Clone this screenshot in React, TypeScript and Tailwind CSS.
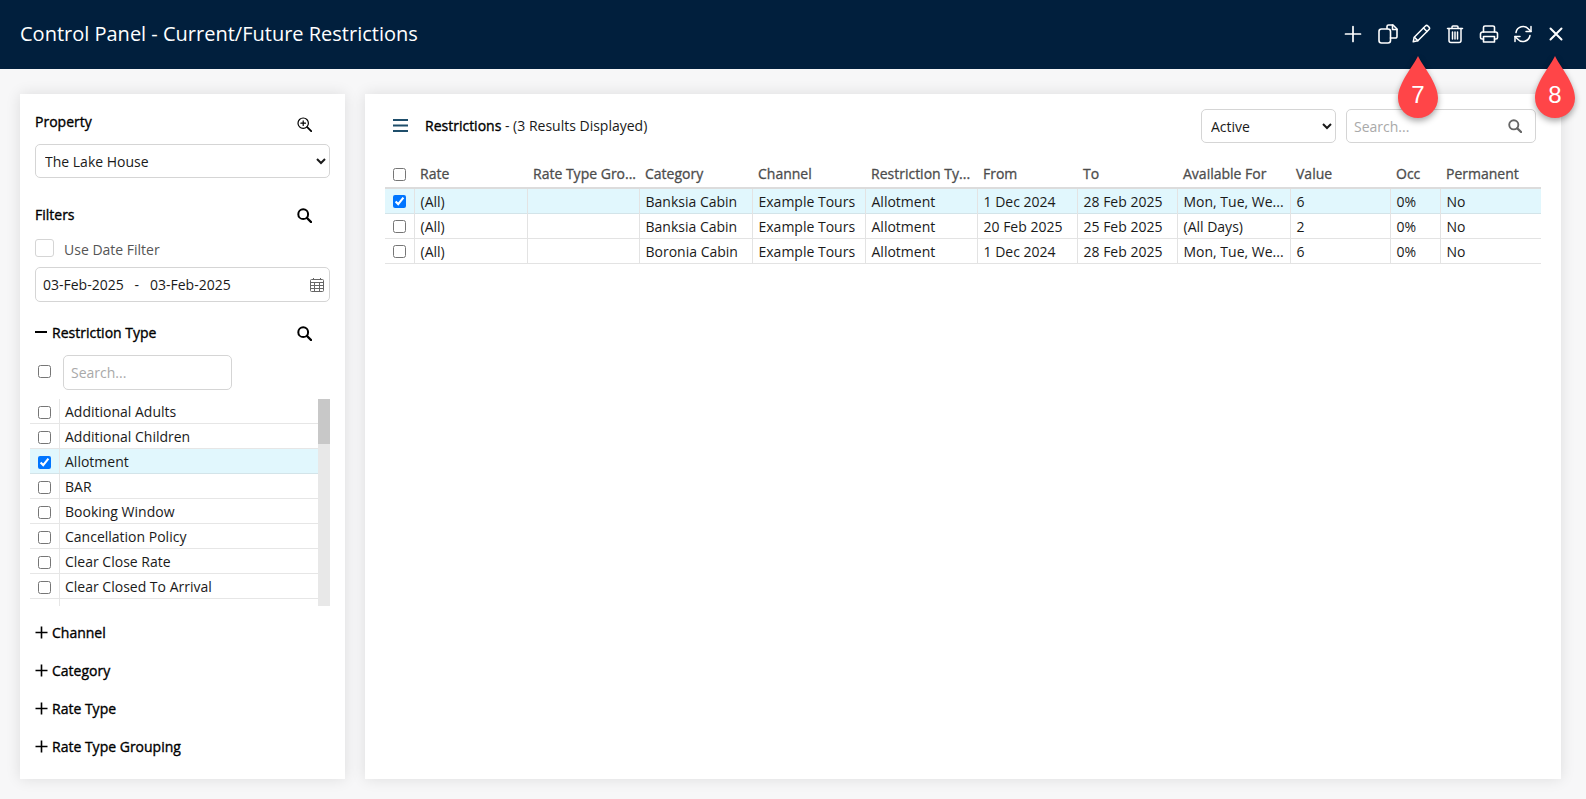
import React from "react";

const font = { fontFamily: '"Open Sans", "Noto Sans", sans-serif' };

function Stroke({ children, size = 20, w = 1.6, cls = "" }: { children: React.ReactNode; size?: number; w?: number; cls?: string }) {
  return (
    <svg width={size} height={size} viewBox="0 0 20 20" fill="none" stroke="currentColor" strokeWidth={w} strokeLinecap="round" strokeLinejoin="round" className={cls}>
      {children}
    </svg>
  );
}

const HeaderIcons = [
  <Stroke key="plus" w={1.7}><path d="M10 2.500v15M2.500 10h15" /></Stroke>,
  <Stroke key="copy" w={1.6} cls="translate-x-[1px]">
    <path d="M9 4.500V2.500A1.500 1.500 0 0 1 10.500 1h4.500l4 4v7.500a1.500 1.500 0 0 1-1.500 1.500h-5" />
    <path d="M14.500 1v4.500H19" />
    <rect x="1" y="5" width="11.500" height="14" rx="2.500" />
  </Stroke>,
  <Stroke key="pen" w={1.5}>
    <path d="M2.200 17.800l1-4.600L14.400 2a1.800 1.800 0 0 1 2.500 0l1.100 1.100a1.800 1.800 0 0 1 0 2.500L6.800 16.800z" />
    <path d="M12.500 4l3.500 3.500M3.400 13.200l3.400 3.400" />
  </Stroke>,
  <Stroke key="trash" w={1.500}>
    <path d="M2.500 4.500h15M7 4.500V3a1 1 0 0 1 1-1h4a1 1 0 0 1 1 1v1.500" />
    <path d="M4 4.500v12a2 2 0 0 0 2 2h8a2 2 0 0 0 2-2v-12" />
    <path d="M7.500 8v7M10 8v7M12.500 8v7" />
  </Stroke>,
  <Stroke key="print" w={1.6}>
    <path d="M4.500 8V3.500A1.500 1.500 0 0 1 6 2h8a1.500 1.500 0 0 1 1.500 1.500V8" />
    <path d="M4.500 15H3a1.500 1.500 0 0 1-1.500-1.500V10A2 2 0 0 1 3.500 8h13a2 2 0 0 1 2 2v3.500A1.500 1.500 0 0 1 17 15h-1.500" />
    <path d="M4.500 12.500h11V18h-11z" />
  </Stroke>,
  <Stroke key="sync" w={1.5}>
    <path d="M3 8.500A7.200 7.200 0 0 1 15.500 5L18 7.500" />
    <path d="M18 2.500v5h-5" />
    <path d="M17 11.500A7.200 7.200 0 0 1 4.500 15L2 12.500" />
    <path d="M2 17.500v-5h5" />
  </Stroke>,
  <Stroke key="x" w={2} cls="-ml-[1px]"><path d="M4.500 4.500l11 11M15.500 4.500l-11 11" /></Stroke>,
];

function Search({ cls = "", size = 15 }: { cls?: string; size?: number }) {
  return (
    <svg width={size} height={size} viewBox="0 0 15 15" fill="none" stroke="currentColor" strokeWidth={2} strokeLinecap="round" className={cls}>
      <circle cx="6.200" cy="6.200" r="4.900" />
      <path d="M10 10l4 4" strokeWidth={2.400} />
    </svg>
  );
}

function ZoomPlus() {
  return (
    <svg width="15" height="15" viewBox="0 0 15 15" fill="none" stroke="#000" strokeWidth={1.2} strokeLinecap="round" className="translate-y-[3px]">
      <circle cx="6.200" cy="6.200" r="5.200" />
      <path d="M10.200 10.200l4 4" strokeWidth={1.800} />
      <path d="M6.200 3.900v4.600M3.900 6.200h4.600" />
    </svg>
  );
}

function Pin({ n, cls }: { n: string; cls: string }) {
  return (
    <div className={`absolute top-[56px] w-[40px] h-[62px] ${cls}`}>
      <svg width="40" height="62" viewBox="0 0 40 62" className="absolute inset-0 overflow-visible drop-shadow-[0_3px_3px_rgba(0,0,0,0.35)]">
        <path d="M20 0C24 9 40 27 40 42A20 20 0 0 1 0 42C0 27 16 9 20 0z" fill="#ff4548" />
      </svg>
      <span className="absolute left-0 right-0 top-[25px] text-center text-[24px] leading-[28px] text-white" style={{ fontFamily: '"Liberation Sans", Arial, sans-serif' }}>
        {n}
      </span>
    </div>
  );
}

const types = ["Additional Adults", "Additional Children", "Allotment", "BAR", "Booking Window", "Cancellation Policy", "Clear Close Rate", "Clear Closed To Arrival", ""];

const widths = [29, 113, 112, 113, 113, 112, 100, 100, 113, 100, 50, 101];
const heads = ["Rate", "Rate Type Gro...", "Category", "Channel", "Restriction Ty...", "From", "To", "Available For", "Value", "Occ", "Permanent"];
const rows = [
  ["(All)", "", "Banksia Cabin", "Example Tours", "Allotment", "1 Dec 2024", "28 Feb 2025", "Mon, Tue, We...", "6", "0%", "No"],
  ["(All)", "", "Banksia Cabin", "Example Tours", "Allotment", "20 Feb 2025", "25 Feb 2025", "(All Days)", "2", "0%", "No"],
  ["(All)", "", "Boronia Cabin", "Example Tours", "Allotment", "1 Dec 2024", "28 Feb 2025", "Mon, Tue, We...", "6", "0%", "No"],
];

function Section({ label, top }: { label: string; top: string }) {
  return (
    <div className={`flex items-center h-[20px] pl-[15px] ${top}`}>
      <svg width="13" height="13" viewBox="0 0 13 13" stroke="#000" strokeWidth="1.6"><path d="M6.500 0.500v12M0.500 6.500h12" /></svg>
      <span className="ml-[4px] text-[14px] font-medium text-black [-webkit-text-stroke:0.35px]">{label}</span>
    </div>
  );
}

export default function App() {
  return (
    <div style={font} className="relative h-[799px] w-[1586px] overflow-hidden bg-[#f7f7f8] text-[14px] text-[#1a1a1a]">
      <header className="flex h-[69px] items-center justify-between bg-[#011f3d] pl-5 pr-[20px] text-white">
        <h1 className="text-[20px] leading-[26px] font-normal mt-[-2px]">Control Panel - Current/Future Restrictions</h1>
        <div className="flex items-center gap-[14px] mt-[-2px]">{HeaderIcons}</div>
      </header>

      <div className="flex gap-5 pl-5 pt-[25px]">
        <aside className="relative h-[685px] w-[325px] bg-white shadow-[0_0_14px_rgba(0,0,0,0.11)]">
          <div className="flex items-center justify-between pl-[15px] pr-[33px] pt-[11px] h-[43px]">
            <span className="font-medium text-black [-webkit-text-stroke:0.35px]">Property</span>
            <ZoomPlus />
          </div>
          <select className="mx-[15px] mt-[7px] block h-[34px] w-[295px] rounded-[5px] border border-[#d5d5d5] bg-white pl-[5px] text-[14px] text-[#1a1a1a]" defaultValue="The Lake House">
            <option>The Lake House</option>
          </select>
          <div className="mt-[26px] flex items-center justify-between pl-[15px] pr-[33px] h-[20px]">
            <span className="font-medium text-black [-webkit-text-stroke:0.35px]">Filters</span>
            <Search cls="text-black translate-y-[1px]" />
          </div>
          <label className="mx-[15px] mt-[15px] flex items-center h-[18px]">
            <span className="h-[18px] w-[19px] rounded-[3px] border border-[#d5d5d5] bg-white" />
            <span className="ml-[10px] translate-y-[1px] text-[#555]">Use Date Filter</span>
          </label>
          <div className="mx-[15px] mt-[10px] flex h-[35px] w-[295px] items-center justify-between rounded-[5px] border border-[#d5d5d5] pl-[7px] pr-[5px]">
            <span className="whitespace-pre text-[#1a1a1a]">03-Feb-2025   -   03-Feb-2025</span>
            <svg width="14" height="14" viewBox="0 0 14 14" fill="none" stroke="#666" strokeWidth="1">
              <rect x="0.500" y="1.500" width="13" height="12" rx="1" />
              <path d="M0.500 4.500h13M0.500 7.500h13M0.500 10.500h13M4.500 4.500v9M9.500 4.500v9" />
              <path d="M3.500 0v2M10.500 0v2" />
            </svg>
          </div>
          <div className="mt-[20px] flex items-center justify-between pl-[15px] pr-[33px] h-[20px]">
            <span className="flex items-center">
              <span className="block h-[2px] w-[12px] bg-black" />
              <span className="ml-[5px] font-medium text-black [-webkit-text-stroke:0.35px]">Restriction Type</span>
            </span>
            <Search cls="text-black translate-y-[1px]" />
          </div>
          <div className="mt-[13px] flex items-center pl-[18px] h-[35px]">
            <input type="checkbox" className="m-0 size-[13px] -translate-y-[1px]" />
            <div className="ml-[12px] flex h-[35px] w-[169px] items-center rounded-[5px] border border-[#d5d5d5] pl-[7px] text-[#a9a9a9]">Search...</div>
          </div>
          <div className="ml-[10px] mt-[9px] flex h-[207px] w-[300px] overflow-hidden">
            <ul className="w-[288px]">
              {types.map((t, i) => {
                const on = t === "Allotment";
                return (
                  <li key={i} className={`flex h-[25px] items-center border-b ${on ? "bg-[#e1f7fd] border-[#d3e4e9]" : "border-[#e6e6e6]"}`}>
                    <span className="flex h-full w-[30px] shrink-0 items-center justify-center border-r border-[#e6e6e6]">
                      {t && <input type="checkbox" readOnly checked={on} className="m-0 size-[13px] translate-y-[1px]" />}
                    </span>
                    <span className="pl-[5px] whitespace-nowrap">{t}</span>
                  </li>
                );
              })}
            </ul>
            <div className="h-full w-[12px] bg-[#e8e8e8]">
              <div className="h-[45px] bg-[#c8c8c8]" />
            </div>
          </div>
          <Section label="Channel" top="mt-[16px]" />
          <Section label="Category" top="mt-[18px]" />
          <Section label="Rate Type" top="mt-[18px]" />
          <Section label="Rate Type Grouping" top="mt-[18px]" />
        </aside>

        <main className="h-[685px] w-[1196px] bg-white shadow-[0_0_14px_rgba(0,0,0,0.11)]">
          <div className="flex h-[49px] items-end pl-[28px] pr-[25px]">
            <div className="flex h-[34px] flex-1 items-center self-end">
              <svg width="15" height="13" viewBox="0 0 15 13" fill="#1f4e6b" className="mt-[-2px]">
                <rect width="15" height="2" /><rect y="5.500" width="15" height="2" /><rect y="11" width="15" height="2" />
              </svg>
              <span className="ml-[17px] mt-[-2px] text-[14px]"><b className="font-medium text-black [-webkit-text-stroke:0.35px]">Restrictions</b> - (3 Results Displayed)</span>
            </div>
            <select className="h-[34px] w-[135px] rounded-[5px] border border-[#d5d5d5] bg-white pl-[5px] text-[14px]" defaultValue="Active">
              <option>Active</option>
            </select>
            <div className="ml-[10px] flex h-[34px] w-[190px] items-center justify-between rounded-[5px] border border-[#d5d5d5] pl-[7px] pr-[13px] text-[#a9a9a9]">
              <span>Search...</span>
              <Search cls="text-[#666]" size={14} />
            </div>
          </div>
          <table className="ml-[20px] mt-[15px] table-fixed border-collapse" style={{ width: 1156 }}>
            <colgroup>
              {widths.map((w, i) => <col key={i} style={{ width: w }} />)}
            </colgroup>
            <thead>
              <tr className="h-[30px] border-b-2 border-[#dcdcdc]">
                <th className="p-0 text-center align-middle"><input type="checkbox" className="m-0 block mx-auto size-[13px] translate-y-[2px]" /></th>
                {heads.map((h) => (
                  <th key={h} className="pl-[6px] pr-[4px] pt-[2px] pb-0 text-left font-medium text-[#4d4d4d] [-webkit-text-stroke:0.3px] whitespace-nowrap overflow-hidden">{h}</th>
                ))}
              </tr>
            </thead>
            <tbody>
              {rows.map((r, i) => (
                <tr key={i} className={`h-[25px] border-b ${i === 0 ? "bg-[#e1f7fd] border-[#d3e4e9]" : "border-[#e3e3e3]"}`}>
                  <td className="border-r border-[#e3e3e3] p-0"><input type="checkbox" readOnly checked={i === 0} className="m-0 block mx-auto size-[13px] translate-y-[1px]" /></td>
                  {r.map((c, j) => (
                    <td key={j} className={`pl-[6px] pr-[4px] pt-[2px] pb-0 whitespace-nowrap overflow-hidden ${j < 10 ? "border-r border-[#e3e3e3]" : ""}`}>{c}</td>
                  ))}
                </tr>
              ))}
            </tbody>
          </table>
        </main>
      </div>

      <Pin n="7" cls="left-[1398px]" />
      <Pin n="8" cls="left-[1535px]" />
    </div>
  );
}
